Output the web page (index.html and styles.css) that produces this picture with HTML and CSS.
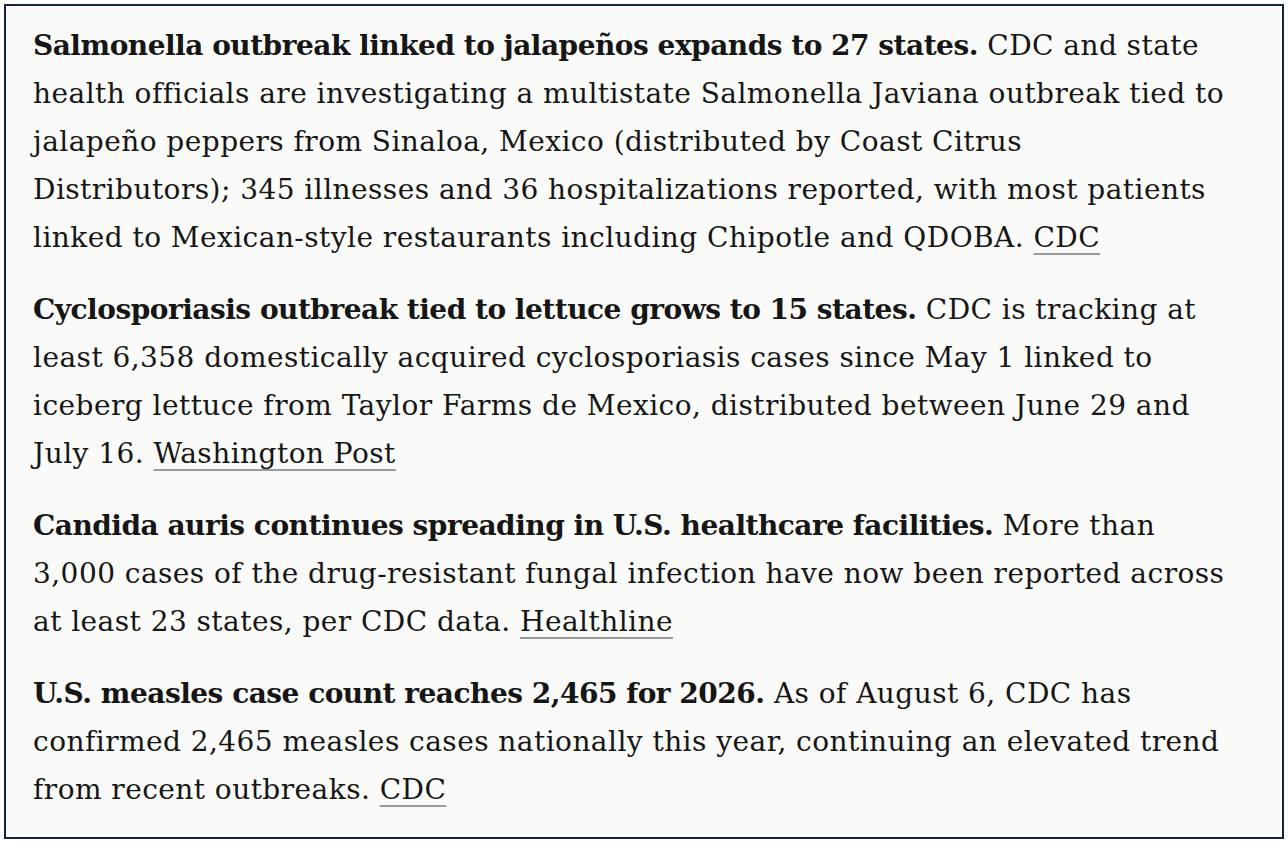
FILE: index.html
```html
<!DOCTYPE html>
<html lang="en">
<head>
<meta charset="utf-8">
<title>Outbreak news</title>
<link rel="stylesheet" href="styles.css">
</head>
<body>
<section class="card">
  <p class="item"><strong>Salmonella outbreak linked to jalapeños expands to 27 states.</strong> CDC and state health officials are investigating a multistate Salmonella Javiana outbreak tied to jalapeño peppers from Sinaloa, Mexico (distributed by Coast Citrus Distributors); 345 illnesses and 36 hospitalizations reported, with most patients linked to Mexican-style restaurants including Chipotle and QDOBA. <a class="src" href="#">CDC</a></p>
  <p class="item"><strong>Cyclosporiasis outbreak tied to lettuce grows to 15 states.</strong> CDC is tracking at least 6,358 domestically acquired cyclosporiasis cases since May 1 linked to iceberg lettuce from Taylor Farms de Mexico, distributed between June 29 and July 16. <a class="src" href="#">Washington Post</a></p>
  <p class="item"><strong>Candida auris continues spreading in U.S. healthcare facilities.</strong> More than 3,000 cases of the drug-resistant fungal infection have now been reported across at least 23 states, per CDC data. <a class="src" href="#">Healthline</a></p>
  <p class="item"><strong>U.S. measles case count reaches 2,465 for 2026.</strong> As of August 6, CDC has confirmed 2,465 measles cases nationally this year, continuing an elevated trend from recent outbreaks. <a class="src" href="#">CDC</a></p>
</section>
</body>
</html>
```

FILE: styles.css
```css
html, body {
  margin: 0;
  background: #ffffff;
}
body {
  padding: 4px;
}
.card {
  border: 2px solid #14243a;
  background: #fafaf9;
  padding: 16px 54px 23px 27px;
  font-family: "DejaVu Serif", "Liberation Serif", serif;
  font-size: 28px;
  line-height: 48px;
  letter-spacing: 0.45px;
  color: #161616;
}
.item {
  margin: 0;
}
.item + .item {
  margin-top: 24px;
}
.item strong {
  font-weight: 700;
  letter-spacing: -0.5px;
}
.src {
  color: #161616;
  text-decoration: underline;
  text-decoration-color: #9a9a9a;
  text-decoration-thickness: 2px;
  text-underline-offset: 6px;
}
```
